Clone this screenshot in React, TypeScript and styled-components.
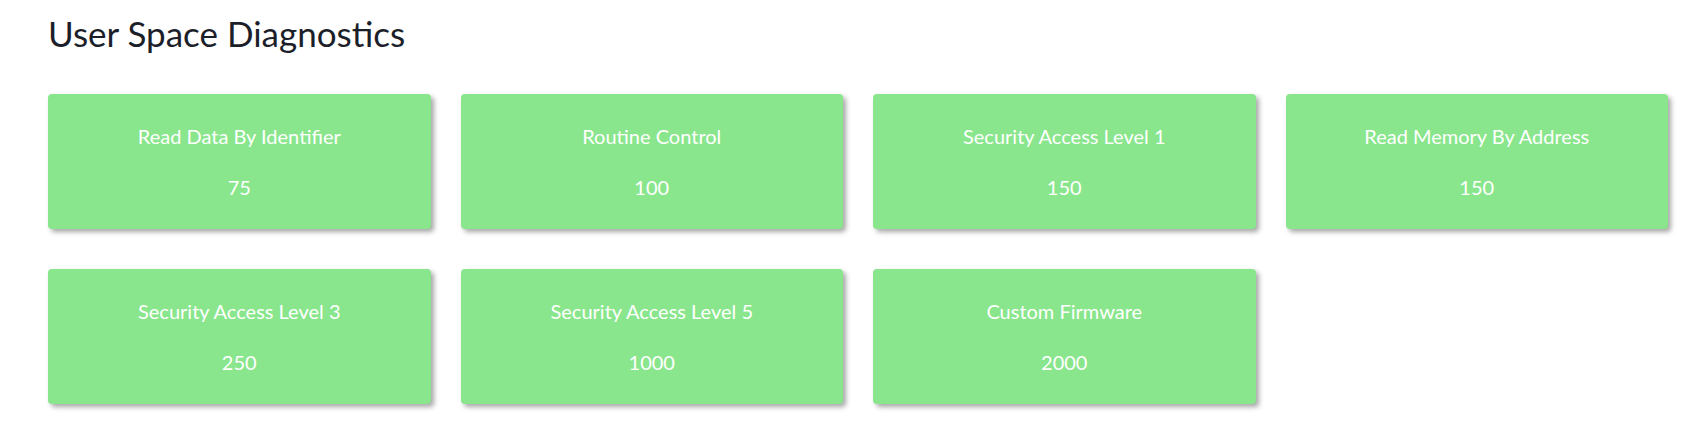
import React from "react";
import styled, { createGlobalStyle } from "styled-components";

const GlobalStyle = createGlobalStyle`
  html, body { margin: 0; padding: 0; background: #ffffff; }
  body { font-family: Lato, "Open Sans", sans-serif; }
`;

const Page = styled.main`
  padding: 13px 39px 20px 48px;
`;

const Heading = styled.h1`
  margin: 0 0 41px 0;
  font-family: Lato, sans-serif;
  font-weight: 400;
  font-size: 35px;
  line-height: 40px;
  color: #1c1f2a;
`;

const Grid = styled.section`
  display: grid;
  grid-template-columns: repeat(4, 382.5px);
  column-gap: 30px;
  row-gap: 40px;
`;

const Card = styled.div`
  height: 135px;
  box-sizing: border-box;
  background: #89e68c;
  border-radius: 4px;
  box-shadow: 3px 3px 5px rgba(0, 0, 0, 0.35);
  display: flex;
  flex-direction: column;
  align-items: center;
  padding-top: 30px;
  gap: 27px;
  color: #ffffff;
  font-family: Lato, sans-serif;
  font-size: 20px;
  line-height: 24px;
`;

const CardLabel = styled.div``;
const CardValue = styled.div``;

const items = [
  { label: "Read Data By Identifier", value: 75 },
  { label: "Routine Control", value: 100 },
  { label: "Security Access Level 1", value: 150 },
  { label: "Read Memory By Address", value: 150 },
  { label: "Security Access Level 3", value: 250 },
  { label: "Security Access Level 5", value: 1000 },
  { label: "Custom Firmware", value: 2000 },
];

export default function App() {
  return (
    <>
      <GlobalStyle />
      <Page>
        <Heading>User Space Diagnostics</Heading>
        <Grid>
          {items.map((it) => (
            <Card key={it.label}>
              <CardLabel>{it.label}</CardLabel>
              <CardValue>{it.value}</CardValue>
            </Card>
          ))}
        </Grid>
      </Page>
    </>
  );
}
